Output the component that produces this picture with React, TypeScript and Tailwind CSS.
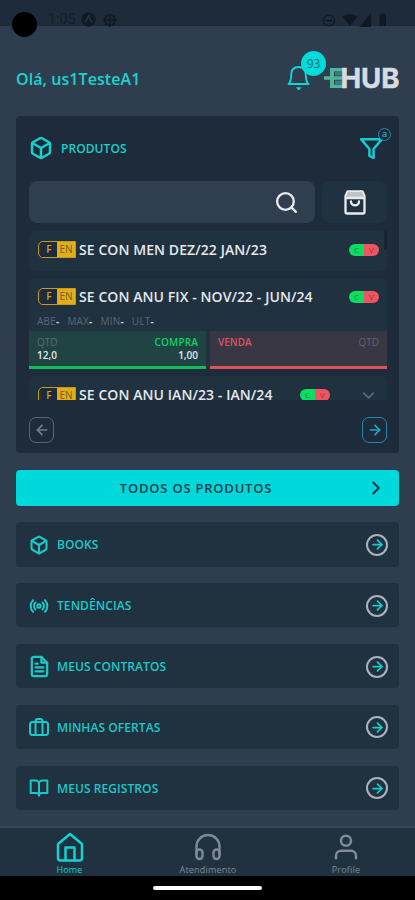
import type { ReactNode } from "react";
import { FiArrowLeft, FiArrowRight, FiBookOpen, FiBox, FiChevronDown, FiChevronRight, FiFileText, FiFilter, FiRadio, FiSearch, FiUser } from "react-icons/fi";

interface MenuItem {
  label: string;
  icon: ReactNode;
}

function StatusBar() {
  return (
    <div className="relative h-[26px] bg-[#1d2b3a]">
      <div className="absolute left-3 top-3 h-[25px] w-[25px] rounded-full bg-black" />
      <div className="flex h-[27px] items-end justify-between pl-[48px] pr-[27px]">
        <div className="flex items-center gap-[7px] text-[#101a24]">
          <span className="mr-px font-[Roboto] text-[14px] leading-[13px] tracking-[0.1px] text-[#141f29]">1:05</span>
          <svg className="-ml-[2px] h-[15px] w-[15px]" viewBox="0 0 15 15" fill="none">
            <circle cx="7.5" cy="7.5" r="7.2" fill="currentColor" />
            <path d="M4 10.5L7.5 4l3.500 6.500" stroke="#263646" strokeWidth="1.4" />
          </svg>
          <svg className="h-[14px] w-[14px]" viewBox="0 0 14 14" fill="none" stroke="currentColor">
            <circle cx="7" cy="7" r="5" strokeWidth="1.8" />
            <path d="M7 0v5M7 9v5M0 7h5M9 7h5M2 2l2 2M12 2l-2 2M2 12l2-2M12 12l-2-2" strokeWidth="1.4" />
            <circle cx="7" cy="7" r="1.5" fill="currentColor" />
          </svg>
        </div>
        <svg className="h-[14px] w-[66px] text-[#0f1922]" viewBox="0 0 66 14" fill="currentColor">
          <circle cx="7" cy="7.5" r="5.5" fill="none" stroke="currentColor" strokeWidth="1.2" />
          <path d="M4 7h6v1.300H4z" />
          <path d="M20.500 3.500Q28 -1 35.500 3.500L28 13z" />
          <path d="M49 1v13H37z" />
          <path d="M57.500 1.500h2V0.500h3v1h1.500V13h-6.500z" />
        </svg>
      </div>
    </div>
  );
}

function Header() {
  return (
    <div className="flex h-[90px] items-start justify-between pl-4 pr-[14px]">
      <h1 className="mt-[42px] text-[16px] font-semibold leading-[22px] tracking-[0.080px] text-[#1bd3cf]">Olá, us1TesteA1</h1>
      <div className="flex">
        <div className="relative mt-[38px] mr-[10px] h-[27px] w-[24px] text-[#12d5d6]">
          <svg className="h-[27px] w-[24px]" viewBox="0 0 24 27" fill="none" stroke="currentColor" strokeWidth="1.900">
            <path d="M1.500 20H21.500C19 18 18.800 15 18.800 11C18.800 5.500 16.300 3 11.500 3C6.700 3 4.200 5.500 4.200 11C4.200 15 4 18 1.500 20z" strokeLinejoin="round" />
            <path d="M9 23.300h5.500l-2 2.700h-1.500z" fill="currentColor" stroke="none" />
          </svg>
          <span className="absolute -top-[13px] left-[14px] flex h-[25px] w-[25px] items-center justify-center rounded-full bg-[#00dcdc] text-[12px] text-[#176c7b]">93</span>
        </div>
        <svg className="mt-[38px] h-[28px] w-[80px] overflow-visible" viewBox="0 0 80 28">
          <path d="M3 14h18M10 5.800h12M10 22.300h12" stroke="#4fb49c" strokeWidth="3.500" />
          <rect x="9" y="4" width="4" height="20" fill="#4fb49c" />
          <rect x="14" y="8" width="7" height="3.500" fill="#3a7f7c" />
          <rect x="14" y="16.500" width="7" height="3.500" fill="#3a7f7c" />
          <text x="19.500" y="24" className="font-[Inter] font-bold" fontSize="27" fill="#d8dce1" stroke="#d8dce1" strokeWidth="0.500" textLength="59" lengthAdjust="spacingAndGlyphs">HUB</text>
        </svg>
      </div>
    </div>
  );
}

function EnergyTag() {
  return (
    <span className="flex h-[17px] w-[38px] shrink-0 overflow-hidden rounded-l-[5px] border-[1.500px] border-[#c39a22] text-[10px] leading-[15px]">
      <span className="ml-[2px] w-[16px] bg-[#1c2a3c] text-center font-semibold text-[#d6a51c]">F</span>
      <span className="flex-1 bg-[#e3ad17] text-center text-[#6d612f]">EN</span>
    </span>
  );
}

function SidesTag() {
  return (
    <span className="flex h-3 w-[30px] shrink-0 overflow-hidden rounded-full text-[8px] leading-3">
      <span className="flex-1 bg-[#0bdc62] text-center text-[#13803f]">C</span>
      <span className="flex-1 bg-[#f05462] text-center text-[#963845]">V</span>
    </span>
  );
}

function ProductTitle({ name }: { name: string }) {
  return (
    <div className="flex items-center">
      <EnergyTag />
      <span className="ml-[3px] whitespace-nowrap text-[14px] font-semibold leading-[20px] tracking-[0.080px] text-[#e4e8ec]">{name}</span>
    </div>
  );
}

function ProductList() {
  return (
    <div className="relative mt-2 flex h-[169px] flex-col gap-[7px] overflow-hidden">
      <div className="absolute right-0 top-0 h-[19px] w-[3px] rounded bg-[#16232f]" />
      <div className="flex h-10 shrink-0 items-center justify-between rounded-md bg-[#203140] pb-[3px] pl-[9px] pr-2">
        <ProductTitle name="SE CON MEN DEZ/22 JAN/23" />
        <SidesTag />
      </div>
      <div className="h-[91px] shrink-0 overflow-hidden rounded-t-md bg-[#203140]">
        <div className="flex h-[37px] items-center justify-between pl-[9px] pr-2">
          <ProductTitle name="SE CON ANU FIX - NOV/22 - JUN/24" />
          <SidesTag />
        </div>
        <div className="flex h-4 gap-[8px] pl-2 text-[10px] leading-[12px] text-[#5c6874]">
          {["ABE", "MAX", "MIN", "ULT"].map((label) => (
            <span key={label} className="tracking-[0.200px]">{label}<b className="text-[#cbd1d6]">-</b></span>
          ))}
        </div>
        <div className="flex h-[38px] gap-1 text-[10px] leading-[13px]">
          <div className="w-[177px] border-b-[3px] border-[#12bd5a] bg-[#204443] px-2 pt-[5px]">
            <div className="flex justify-between">
              <span className="text-[#5a6b70]">QTD</span>
              <span className="font-semibold tracking-[0.150px] text-[#10cf65]">COMPRA</span>
            </div>
            <div className="flex justify-between font-semibold text-[#e4e8ec]">
              <span>12,0</span>
              <span>1,00</span>
            </div>
          </div>
          <div className="flex flex-1 justify-between border-b-[3px] border-[#da535e] bg-[#393744] px-2 pt-[5px]">
            <span className="font-semibold text-[#dc5561]">VENDA</span>
            <span className="text-[#5c6270]">QTD</span>
          </div>
        </div>
      </div>
      <div className="flex h-10 shrink-0 items-center justify-between rounded-md bg-[#203140] pb-[2px] pl-[9px] pr-[9px]">
        <ProductTitle name="SE CON ANU JAN/23 - JAN/24" />
        <div className="flex items-center gap-[29px]">
          <SidesTag />
          <FiChevronDown className="h-[19px] w-[19px] text-[#5d6a76]" />
        </div>
      </div>
    </div>
  );
}

function ProductsCard() {
  return (
    <section className="h-[337px] rounded-[4px] bg-[#1d2b3a] pl-[13px] pr-3 pt-[13px]">
      <div className="flex h-[38px] items-center justify-between">
        <div className="flex items-center text-[#1bcfcc]">
          <FiBox className="h-6 w-6" strokeWidth={2.500} />
          <h2 className="ml-2 pt-px text-[12px] font-semibold tracking-[0.080px]">PRODUTOS</h2>
        </div>
        <div className="relative mr-[3px] text-[#12cbd4]">
          <FiFilter className="h-[25px] w-[25px]" strokeWidth={2.400} />
          <span className="absolute -right-[7px] -top-[8px] flex h-[13px] w-[13px] items-center justify-center rounded-full border border-[#238dad] bg-[#1d2b3a] pb-px text-[9px] font-semibold leading-none text-[#20adc0]">a</span>
        </div>
      </div>
      <div className="mt-[14px] flex gap-[7px]">
        <div className="flex h-[42px] w-[286px] items-center justify-end rounded-[8px] bg-[#303f4f] pr-4">
          <FiSearch className="h-[25px] w-[25px] text-[#e8eaec]" strokeWidth={2.200} />
        </div>
        <div className="flex h-[42px] flex-1 items-center justify-center rounded-[8px] bg-[#203140]">
          <svg className="h-[25px] w-[24px]" viewBox="0 0 24 25" fill="none" stroke="#e8eaec" strokeWidth="2.300" strokeLinejoin="round">
            <path d="M4.500 1.500h15l2 4.500v16q0 1.500-1.500 1.500H4q-1.500 0-1.500-1.500V6z" />
            <path d="M5 2h14l1.500 5h-17z" fill="#bfc4c9" stroke="none" />
            <path d="M3 8h18M8 11.500c0 5 8 5 8 0" strokeLinecap="round" />
          </svg>
        </div>
      </div>
      <ProductList />
      <div className="mt-[17px] flex justify-between">
        <button className="flex h-[26px] w-[25px] items-center justify-center rounded-[7px] border-[1.500px] border-[#596773] text-[#71808b]">
          <FiArrowLeft className="h-4 w-4" strokeWidth={2.500} />
        </button>
        <button className="flex h-[26px] w-[25px] items-center justify-center rounded-[7px] border-[1.500px] border-[#2188ad] text-[#20a8cd]">
          <FiArrowRight className="h-4 w-4" strokeWidth={2.500} />
        </button>
      </div>
    </section>
  );
}

const suitcase = (
  <svg className="h-5 w-5" viewBox="0 0 20 20" fill="none" stroke="currentColor" strokeWidth="2" strokeLinejoin="round">
    <rect x="1" y="5" width="18" height="13" rx="2.500" />
    <path d="M6.500 18V4.500q0-2.500 2-2.500h3q2 0 2 2.500V18" />
  </svg>
);

const menu: MenuItem[] = [
  { label: "BOOKS", icon: <FiBox className="h-5 w-5" strokeWidth={2.500} /> },
  { label: "TENDÊNCIAS", icon: <FiRadio className="h-5 w-5" strokeWidth={2.400} /> },
  { label: "MEUS CONTRATOS", icon: <FiFileText className="h-[23px] w-[23px] shrink-0" strokeWidth={2.300} /> },
  { label: "MINHAS OFERTAS", icon: suitcase },
  { label: "MEUS REGISTROS", icon: <FiBookOpen className="h-5 w-5" strokeWidth={2.400} /> },
];

function MenuRow({ label, icon }: MenuItem) {
  return (
    <div className="flex h-[44.500px] shrink-0 items-center justify-between rounded-[4px] bg-[#203140] pl-[13px] pr-[11px] pt-px text-[#1bc9c9]">
      <div className="flex items-center">
        <span className="flex w-5 justify-center">{icon}</span>
        <span className="ml-2 pt-px text-[12px] font-semibold tracking-[0.080px]">{label}</span>
      </div>
      <span className="flex h-[22px] w-[22px] items-center justify-center rounded-full border-[2px] border-[#aab2bc]">
        <FiArrowRight className="h-[15px] w-[15px] shrink-0 text-[#16cdcc]" strokeWidth={2.800} />
      </span>
    </div>
  );
}

function BottomNav() {
  return (
    <nav className="flex h-[50px] items-start border-t-2 border-[#364757] bg-[#203140] text-[#818b94]">
      <div className="flex w-[139px] flex-col items-center pt-[4px] text-[#12d2d4]">
        <svg className="h-[30px] w-[30px]" viewBox="0 0 30 30" fill="none" stroke="currentColor" strokeWidth="2.500" strokeLinejoin="round">
          <path d="M3 12L15 2l12 10v14q0 2.500-2.500 2.500h-19Q3 28.500 3 26z" />
          <path d="M10.500 28.500V15.500h9v13" />
        </svg>
        <span className="mt-[2px] text-[9px] leading-3 tracking-[0.200px]">Home</span>
      </div>
      <div className="flex w-[138px] flex-col items-center pt-[4px]">
        <svg className="h-[30px] w-[30px]" viewBox="0 0 30 30" fill="none" stroke="currentColor" strokeWidth="2.400" strokeLinejoin="round">
          <path d="M3.500 23V14.500a11.500 11.500 0 0 1 23 0V23" />
          <rect x="3.500" y="17.500" width="6" height="9.500" rx="3" />
          <rect x="20.500" y="17.500" width="6" height="9.500" rx="3" />
        </svg>
        <span className="mt-[2px] text-[9px] leading-3 tracking-[0.200px]">Atendimento</span>
      </div>
      <div className="flex flex-1 flex-col items-center pt-[4px]">
        <FiUser className="h-[30px] w-[30px]" />
        <span className="mt-[2px] text-[9px] leading-3 tracking-[0.200px]">Profile</span>
      </div>
    </nav>
  );
}

export default function App() {
  return (
    <div className="flex h-[900px] w-[415px] flex-col overflow-hidden bg-[#2f3e4f] font-['Open_Sans',sans-serif]">
      <StatusBar />
      <Header />
      <main className="flex flex-1 flex-col px-4">
        <ProductsCard />
        <button className="mt-[17px] flex h-9 shrink-0 items-center rounded-[4px] bg-[#00d9db] pr-3 text-[#143c4b]">
          <span className="flex-1 pl-[11px] pt-px text-center text-[13px] font-semibold tracking-[0.780px]">TODOS OS PRODUTOS</span>
          <FiChevronRight className="h-[22px] w-[22px]" strokeWidth={2.400} />
        </button>
        <div className="mt-4 flex flex-col gap-[16.400px]">
          {menu.map((item) => (
            <MenuRow key={item.label} {...item} />
          ))}
        </div>
      </main>
      <BottomNav />
      <div className="flex h-6 justify-center bg-black pt-[10px]">
        <div className="h-1 w-[109px] rounded-full bg-white" />
      </div>
    </div>
  );
}
